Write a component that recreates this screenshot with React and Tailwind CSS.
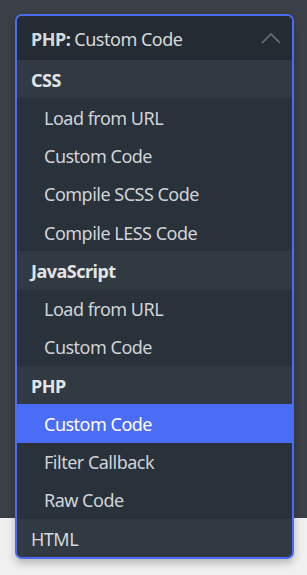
import React from 'react';

const groups = [
  { label: 'CSS', items: ['Load from URL', 'Custom Code', 'Compile SCSS Code', 'Compile LESS Code'] },
  { label: 'JavaScript', items: ['Load from URL', 'Custom Code'] },
  { label: 'PHP', items: ['Custom Code', 'Filter Callback', 'Raw Code'] },
];

const ChevronUp = () => (
  <svg width="20" height="12" viewBox="0 0 20 12" fill="none" className="mb-[3px]">
    <path d="M1 11 L10 2 L19 11" stroke="#6b7178" strokeWidth="1.6" />
  </svg>
);

const App = () => {
  return (
    <div
      className="w-[307px] h-[575px] bg-[#f0f0f0] overflow-hidden"
      style={{ fontFamily: '"Noto Sans", "Open Sans", sans-serif' }}
    >
      <div className="h-[518px] bg-[#3c4047] pt-[14px] pl-[15px]">
        <div className="relative z-10 w-[279px] rounded-[7px] border-2 border-[#4a6cf7] bg-[#29313a] overflow-hidden shadow-[0_4px_8px_rgba(0,0,0,0.25)] text-[18px] tracking-[-0.5px]">
          <div className="h-[44px] flex items-center justify-between bg-[#252b32] pl-[14px] pr-[11px] pt-[2px] text-[#d6d9dc]">
            <span>
              <span className="font-bold">PHP:</span> Custom Code
            </span>
            <ChevronUp />
          </div>
          {groups.map((g) => (
            <div key={g.label}>
              <div className="h-[38.25px] flex items-center bg-[#313a42] pl-[14px] pt-[2px] font-bold text-[#e2e4e6]">
                {g.label}
              </div>
              {g.items.map((item) => {
                const active = g.label === 'PHP' && item === 'Custom Code';
                return (
                  <div
                    key={item}
                    className={
                      active
                        ? 'h-[38.25px] flex items-center bg-[#4a6cf7] pl-[27px] pt-[2px] text-white'
                        : 'h-[38.25px] flex items-center pl-[27px] pt-[2px] text-[#d0d4d8]'
                    }
                  >
                    {item}
                  </div>
                );
              })}
            </div>
          ))}
          <div className="h-[38.25px] flex items-center bg-[#313a42] pl-[14px] pt-[2px] text-[#d6d9dc]">
            HTML
          </div>
        </div>
      </div>
    </div>
  );
};

export default App;
